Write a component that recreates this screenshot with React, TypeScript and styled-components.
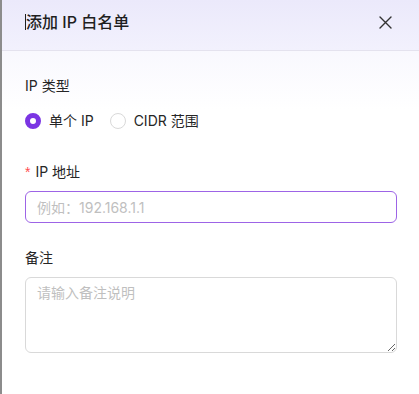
import React, { useState } from 'react';
import styled, { createGlobalStyle } from 'styled-components';

const GlobalStyle = createGlobalStyle`
    html, body {
        margin: 0;
        padding: 0;
        background: #ffffff;
    }
    body {
        font-family: Inter, "Noto Sans CJK SC", sans-serif;
        color: #1f1f1f;
    }
    * {
        box-sizing: border-box;
    }
`;

const Panel = styled.div`
    width: 419px;
    height: 394px;
    border-left: 2px solid #8c8c8c;
    background: linear-gradient(180deg, #f3f2fd 0px, #ffffff 110px);
    display: flex;
    flex-direction: column;
`;

const Header = styled.div`
    height: 51px;
    padding: 10px 27px 16px 23px;
    display: flex;
    align-items: center;
    justify-content: space-between;
    background: linear-gradient(180deg, #ebe9fb 0%, #f2f1fd 100%);
    border-bottom: 1px solid #e4e2ee;
`;

const Title = styled.div`
    font-size: 16px;
    line-height: 24px;
    font-weight: 500;
    color: #1f1f1f;
    display: flex;
    align-items: center;
`;

const Caret = styled.span`
    width: 1px;
    height: 16px;
    background: #1f1f1f;
    margin-right: 0;
`;

const CloseButton = styled.button`
    border: none;
    background: transparent;
    padding: 0;
    width: 14px;
    height: 14px;
    display: flex;
    align-items: center;
    justify-content: center;
    color: #333333;
    cursor: pointer;
`;

const Body = styled.form`
    padding: 24px 22px 0 23px;
    display: flex;
    flex-direction: column;
    gap: 24px;
`;

const Item = styled.div`
    display: flex;
    flex-direction: column;
    gap: 8px;
`;

const Label = styled.label`
    font-size: 14px;
    line-height: 22px;
    color: #262626;
    display: flex;
    align-items: center;
`;

const Required = styled.span`
    color: #ff4d4f;
    margin-right: 5px;
    font-size: 14px;
    font-family: SimSun, "Liberation Sans", sans-serif;
`;

const RadioGroup = styled.div`
    height: 32px;
    display: flex;
    align-items: center;
    gap: 16px;
`;

const RadioOption = styled.label`
    display: flex;
    align-items: center;
    gap: 8px;
    font-size: 14px;
    line-height: 22px;
    color: #262626;
    cursor: pointer;
`;

const RadioDot = styled.span<{ $checked: boolean }>`
    width: 16px;
    height: 16px;
    border-radius: 50%;
    border: ${p => p.$checked ? '5px solid #7b35e3' : '1px solid #d9d9d9'};
    background: #ffffff;
`;

const TextInput = styled.input<{ $active?: boolean }>`
    width: 100%;
    height: 32px;
    padding: 4px 11px;
    font-size: 14px;
    font-family: Inter, "Noto Sans CJK SC", sans-serif;
    border: 1px solid ${p => p.$active ? '#9d64e6' : '#d9d9d9'};
    border-radius: 6px;
    outline: none;
    color: #262626;
    background: #ffffff;
    &::placeholder {
        color: #bfbfbf;
    }
`;

const TextArea = styled.textarea`
    width: 100%;
    height: 76px;
    padding: 4px 11px;
    font-size: 14px;
    line-height: 22px;
    font-family: Inter, "Noto Sans CJK SC", sans-serif;
    border: 1px solid #d9d9d9;
    border-radius: 6px;
    outline: none;
    color: #262626;
    background: #ffffff;
    resize: vertical;
    display: block;
    &::placeholder {
        color: #bfbfbf;
    }
`;

const CloseIcon = () => (
    <svg width="13" height="13" viewBox="0 0 13 13" fill="none">
        <path d="M1 1L12 12M12 1L1 12" stroke="currentColor" strokeWidth="1.4" strokeLinecap="round" />
    </svg>
);

const App: React.FC = () => {
    const [type, setType] = useState<'single' | 'cidr'>('single');

    return (
        <>
            <GlobalStyle />
            <Panel>
                <Header>
                    <Title>
                        <Caret />
                        添加 IP 白名单
                    </Title>
                    <CloseButton type="button" aria-label="关闭">
                        <CloseIcon />
                    </CloseButton>
                </Header>
                <Body>
                    <Item>
                        <Label>IP 类型</Label>
                        <RadioGroup>
                            <RadioOption onClick={() => setType('single')}>
                                <RadioDot $checked={type === 'single'} />
                                单个 IP
                            </RadioOption>
                            <RadioOption onClick={() => setType('cidr')}>
                                <RadioDot $checked={type === 'cidr'} />
                                CIDR 范围
                            </RadioOption>
                        </RadioGroup>
                    </Item>
                    <Item>
                        <Label>
                            <Required>*</Required>
                            IP 地址
                        </Label>
                        <TextInput $active placeholder="例如：192.168.1.1" />
                    </Item>
                    <Item>
                        <Label>备注</Label>
                        <TextArea placeholder="请输入备注说明" />
                    </Item>
                </Body>
            </Panel>
        </>
    );
};

export default App;
